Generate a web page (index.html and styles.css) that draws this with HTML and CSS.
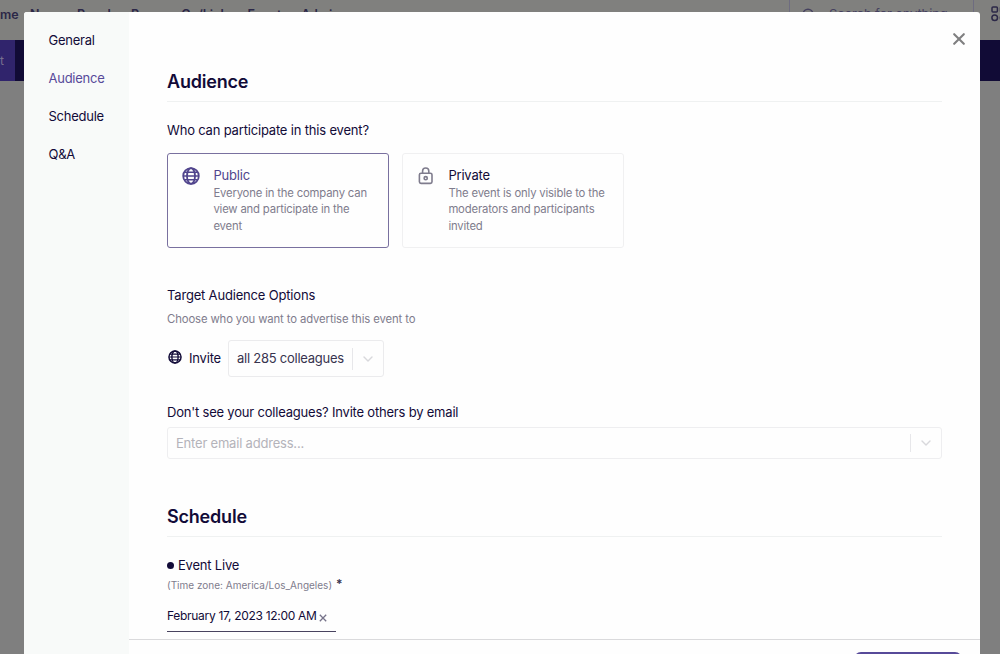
FILE: index.html
```html
<!DOCTYPE html>
<html lang="en">
<head>
<meta charset="utf-8">
<title>Event settings</title>
<link rel="stylesheet" href="styles.css">
</head>
<body>
<svg width="0" height="0" class="defs" aria-hidden="true">
  <symbol id="globe" viewBox="0 0 18 18">
    <g fill="none" stroke="currentColor" stroke-width="1.8">
      <circle cx="9" cy="9" r="7.8"/>
      <ellipse cx="9" cy="9" rx="4" ry="7.8"/>
      <path d="M1.2 9h15.6M2.5 5.2h13M2.5 12.8h13" stroke-width="1.6"/>
    </g>
  </symbol>
  <symbol id="chevron" viewBox="0 0 10 6">
    <path d="M1 1l4 4 4-4" fill="none" stroke="currentColor" stroke-width="1.4" stroke-linecap="round" stroke-linejoin="round"/>
  </symbol>
</svg>
<div class="page">
  <header class="topbar">
    <nav class="topnav"><span>me</span><span>News</span><span>People</span><span>Pages</span><span>Go/Links</span><span>Events</span><span>Admin</span></nav>
    <div class="search">
      <svg width="14" height="14" viewBox="0 0 14 14" fill="none" stroke="currentColor" stroke-width="1.5"><circle cx="6" cy="6" r="4.8"/><path d="M9.5 9.5l3.5 3.5"/></svg>
      <span>Search for anything</span>
    </div>
    <svg class="apps" width="16" height="16" viewBox="0 0 16 16" fill="none" stroke="currentColor" stroke-width="1.5"><rect x="1" y="1" width="5.4" height="5" rx="1"/><rect x="9.5" y="1" width="5.4" height="5" rx="1"/><circle cx="3.7" cy="11.8" r="2.8"/><circle cx="12.2" cy="11.8" r="2.8"/></svg>
  </header>
  <div class="banner"><span class="banner-tab">t</span></div>
</div>
<div class="modal">
  <aside class="sidebar">
    <span>General</span><span class="active">Audience</span><span>Schedule</span><span>Q&amp;A</span>
  </aside>
  <div class="main">
    <div class="content">
      <h2 class="heading">Audience</h2>
      <p class="label question">Who can participate in this event?</p>
      <div class="cards">
        <div class="card selected">
          <svg class="card-icon" width="18" height="18"><use href="#globe"/></svg>
          <div><div class="card-title">Public</div><div class="card-text">Everyone in the company can<br>view and participate in the<br>event</div></div>
        </div>
        <div class="card private">
          <svg class="card-icon" width="18" height="18" viewBox="0 0 18 18" fill="none" stroke="currentColor" stroke-width="1.6"><rect x="2.4" y="6.2" width="12.6" height="10.2" rx="1.6"/><path d="M5.6 6V4.1a3.1 3.1 0 0 1 6.2 0V6"/><circle cx="8.7" cy="11.2" r="1.6"/></svg>
          <div><div class="card-title">Private</div><div class="card-text">The event is only visible to the<br>moderators and participants<br>invited</div></div>
        </div>
      </div>
      <p class="label target">Target Audience Options</p>
      <p class="hint">Choose who you want to advertise this event to</p>
      <div class="invite">
        <svg width="14" height="14"><use href="#globe"/></svg>
        <span class="invite-label">Invite</span>
        <div class="select"><span>all 285 colleagues</span><i class="divider"></i><svg width="10" height="6"><use href="#chevron"/></svg></div>
      </div>
      <p class="label others">Don't see your colleagues? Invite others by email</p>
      <div class="email"><span>Enter email address...</span><i class="divider"></i><svg width="10" height="6"><use href="#chevron"/></svg></div>
      <h2 class="heading schedule">Schedule</h2>
      <div class="live"><i class="dot"></i><span>Event Live</span></div>
      <div class="zone"><span>(Time zone: America/Los_Angeles)</span><b>*</b></div>
      <div class="date"><span>February 17, 2023 12:00 AM</span><svg width="8" height="8" viewBox="0 0 8 8"><path d="M.8 .8l6.4 6.4M7.2 .8L.8 7.2" stroke="currentColor" stroke-width="1.3"/></svg></div>
    </div>
    <footer class="footer"><button class="save" aria-label="Save"></button></footer>
    <svg class="close" width="12" height="12" viewBox="0 0 12 12"><path d="M1.2 1.2l9.6 9.6M10.8 1.2l-9.6 9.6" stroke="currentColor" stroke-width="2.1" stroke-linecap="round"/></svg>
  </div>
</div>
</body>
</html>
```
FILE: styles.css
```css
* { box-sizing: border-box; }
body { margin: 0; width: 1000px; height: 654px; overflow: hidden; position: relative; background: #7f7f7f; font-family: Inter, "Liberation Sans", sans-serif; font-size: 13px; letter-spacing: -.2px; color: #120b38; white-space: nowrap; }
p, h2 { margin: 0; }
.defs { position: absolute; }
.topbar { display: flex; height: 40px; background: #80807e; color: #2b2747; }
.topnav { display: flex; gap: 13px; width: 789px; height: 29px; line-height: 30px; font-size: 12.5px; font-weight: 600; letter-spacing: -.04px; flex: none; }
.topnav span:first-child { width: 17px; }
.search { display: flex; gap: 13px; width: 185px; padding: 8px 0 0 12px; border: solid #6e6c80; border-width: 0 1px; color: #45415f; line-height: 13px; letter-spacing: -.1px; flex: none; }
.apps { margin: 6px 0 0 17px; flex: none; }
.banner { height: 41px; background: #110b36; display: flex; }
.banner-tab { width: 15px; background: #30246c; color: #77718f; line-height: 42px; font-size: 12px; }
.modal { position: absolute; left: 24px; top: 12px; width: 956px; height: 642px; display: flex; background: #fefefe; border-radius: 3px 3px 0 0; overflow: hidden; }
.sidebar { width: 105px; background: #f8faf9; padding: 10px 0 0 24.5px; display: flex; flex-direction: column; flex: none; letter-spacing: -.25px; }
.sidebar span { height: 38px; line-height: 37px; }
.sidebar .active { color: #574a99; }
.main { position: relative; flex: 1; display: flex; flex-direction: column; }
.content { height: 627px; padding: 56px 38px 0; flex: none; }
.heading { height: 34px; line-height: 28px; font-size: 18px; font-weight: 600; letter-spacing: -.2px; border-bottom: 1px solid #eff1f1; }
.label { line-height: 18px; letter-spacing: -.18px; }
.question { margin-top: 19px; }
.cards { display: flex; gap: 13px; margin-top: 14px; }
.card { display: flex; width: 222px; height: 95px; border: 1px solid #f0f0f1; border-radius: 3px; padding: 12px 0 0 14px; gap: 13.4px; color: #7f7c8d; }
.selected { border-color: #79709f; }
.card-icon { flex: none; margin-top: 1px; }
.selected .card-icon { color: #51458d; }
.card-title { color: #120b38; line-height: 18px; }
.selected .card-title { color: #51458d; }
.card-text { font-size: 11.3px; line-height: 16.4px; letter-spacing: -.17px; margin-top: 1px; }
.target { margin-top: 38px; }
.hint { color: #7f7c8d; font-size: 11.3px; line-height: 16px; margin-top: 7px; letter-spacing: -.11px; }
.invite { display: flex; align-items: center; margin-top: 13px; height: 37px; }
.invite > svg { margin: -3px 7px 0 1px; }
.invite-label { margin-top: -2px; width: 39px; letter-spacing: -.2px; }
.select { display: flex; align-items: center; width: 156px; height: 37px; border: 1px solid #ebebed; border-radius: 3px; padding-left: 8px; color: #38344f; letter-spacing: -.25px; }
.divider { width: 1px; height: 22px; background: #e7e7ea; }
.select span { width: 115px; margin-top: -2px; }
.select svg, .email svg { margin-left: 10px; color: #d8d8dc; }
.others { margin-top: 26px; letter-spacing: -.2px; }
.email { display: flex; align-items: center; height: 32px; margin-top: 6px; border: 1px solid #eeeef0; border-radius: 3px; padding-left: 8px; color: #b4b3ba; }
.email span { flex: 1; }
.email svg { margin-right: 10px; }
.email .divider { height: 18px; }
.schedule { margin-top: 44px; line-height: 27px; }
.live { display: flex; align-items: center; height: 18px; margin-top: 19px; gap: 4px; }
.dot { width: 7px; height: 7px; border-radius: 50%; background: #120b38; }
.zone { display: flex; gap: 5px; font-size: 10px; line-height: 16px; margin-top: 3px; color: #7f7c8d; letter-spacing: 0; }
.zone b { color: #38344f; font-size: 12px; font-weight: 600; margin: -1px 0 1px -1px; }
.date { display: flex; width: 169px; height: 25px; margin-top: 14px; border-bottom: 1px solid #48435f; line-height: 17px; font-size: 12px; letter-spacing: -.3px; }
.date svg { margin: 7px 0 0 2px; color: #76738a; }
.footer { border-top: 1px solid #dadadc; height: 15px; display: flex; justify-content: flex-end; padding: 12px 18px 0 0; }
.save { width: 108px; height: 36px; border: 0; border-radius: 7px; background: #574a99; flex: none; }
.close { position: absolute; right: 15px; top: 21px; color: #7f7f80; }
```
